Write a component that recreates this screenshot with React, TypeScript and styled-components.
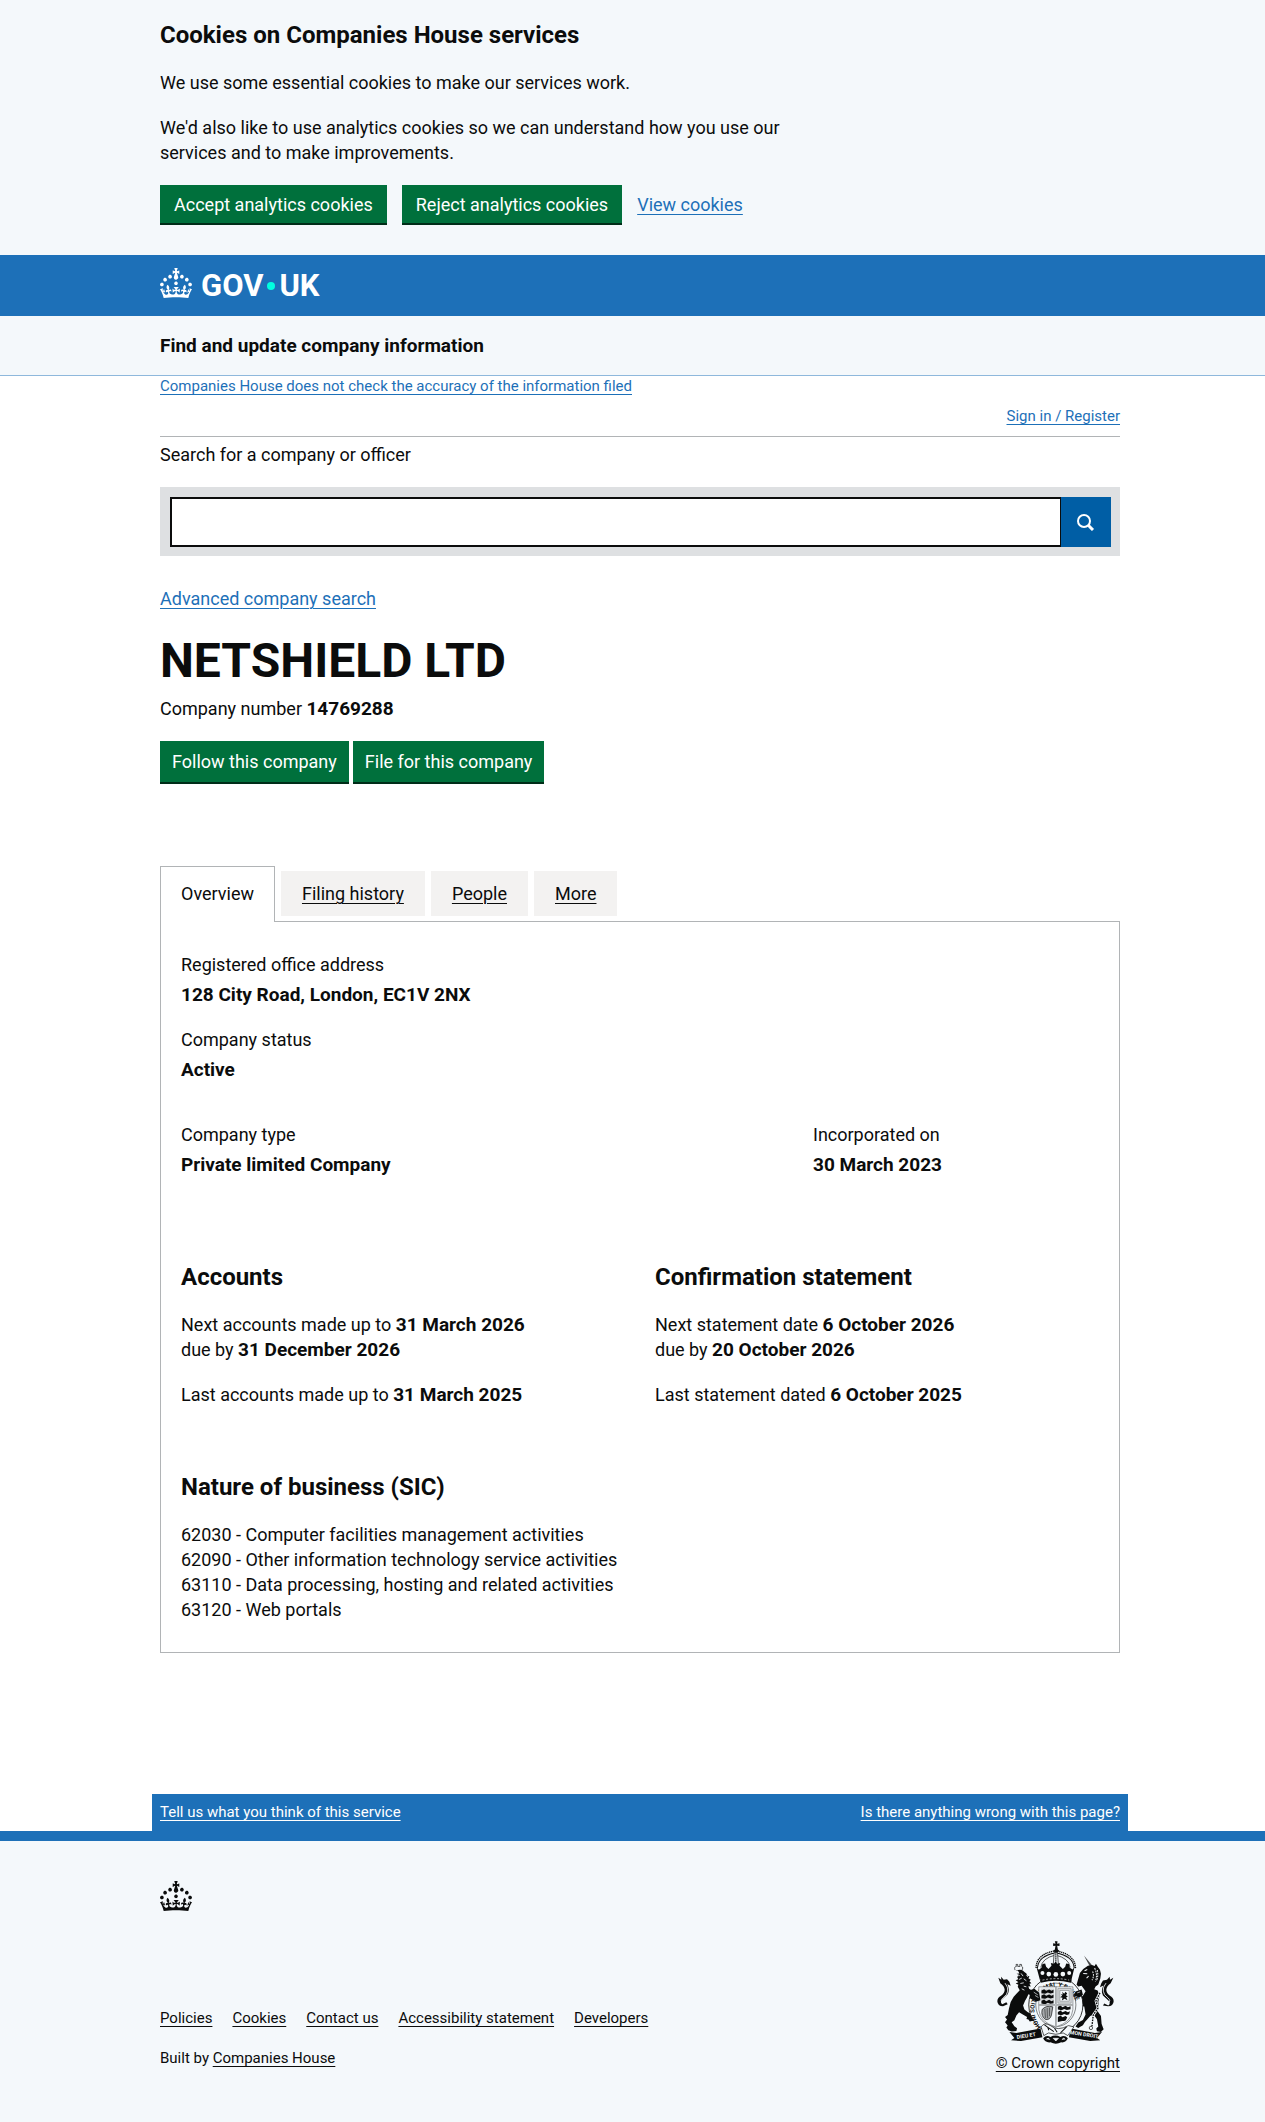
import React from 'react';
import styled, { createGlobalStyle } from 'styled-components';

const colour = {
  text: '#0b0c0c',
  brand: '#1d70b8',
  search: '#005ea5',
  tint: '#f4f8fb',
  green: '#00703c',
  greenShadow: '#002d18',
  border: '#b1b4b6',
  tab: '#f3f2f1',
  searchFrame: '#dee0e2',
};

const GlobalStyle = createGlobalStyle`
  *, *::before, *::after { box-sizing: border-box; }
  body {
    margin: 0;
    background: ${colour.tint};
    color: ${colour.text};
    font: 400 18px/25px Roboto, "Liberation Sans", sans-serif;
  }
  h1, h2, p, dl, dd, ul { margin: 0; padding: 0; }
  ul { list-style: none; }
  button, input { font: inherit; }
`;

const Band = styled.div`
  padding: 0 15px 0 30px;
`;

const Container = styled.div`
  max-width: 960px;
  margin: 0 auto;
`;

const Link = styled.a<{ $tone?: 'brand' | 'text' | 'light'; $small?: boolean }>`
  color: ${({ $tone = 'brand' }) =>
    $tone === 'brand' ? colour.brand : $tone === 'text' ? colour.text : '#fff'};
  font-size: ${({ $small }) => ($small ? '15px' : '18px')};
  line-height: ${({ $small }) => ($small ? '20px' : '25px')};
  text-decoration: underline;
  text-decoration-thickness: 1px;
  text-underline-offset: 3px;
`;

const Strong = styled.strong`
  font-size: 19px;
  font-weight: 700;
`;

const Heading = styled.h2`
  font-size: 24px;
  line-height: 30px;
  font-weight: 700;
`;

/* Cookie banner */

const CookieBanner = styled(Band).attrs({ as: 'section' })`
  padding-top: 20px;
  padding-bottom: 30px;
`;

const CookieCopy = styled.div`
  display: grid;
  gap: 20px;
  max-width: 640px;
`;

const CookieActions = styled.div`
  display: flex;
  flex-wrap: wrap;
  align-items: baseline;
  gap: 15px;
  margin-top: 20px;
`;

const Button = styled.button<{ $tall?: boolean }>`
  height: ${({ $tall }) => ($tall ? '43px' : '40px')};
  padding: 0 ${({ $tall }) => ($tall ? '12px' : '14px')};
  border: 0;
  border-bottom: 2px solid ${colour.greenShadow};
  border-radius: 0;
  background: ${colour.green};
  color: #fff;
  cursor: pointer;
`;

/* Header */

const Header = styled(Band).attrs({ as: 'header' })`
  background: ${colour.brand};
  color: #fff;
`;

const LogoLink = styled.a`
  display: flex;
  align-items: flex-start;
  gap: 9px;
  width: fit-content;
  padding: 13px 0 15px;
  color: inherit;
  text-decoration: none;
`;

const Wordmark = styled.span`
  display: flex;
  align-items: center;
  gap: 4px;
  padding-top: 3px;
  font-size: 31px;
  line-height: 30px;
  font-weight: 700;
`;

const Dot = styled.span`
  width: 8px;
  height: 8px;
  border-radius: 50%;
  background: #00ffe0;
`;

const Crown = styled.svg`
  display: block;
  width: 32px;
  height: 30px;
  fill: currentColor;
`;

const ServiceNav = styled(Band).attrs({ as: 'nav' })`
  padding-top: 17px;
  padding-bottom: 17px;
  border-bottom: 1px solid #8eb8dc;
`;

const ServiceName = styled.a`
  color: ${colour.text};
  font-size: 19px;
  font-weight: 700;
  text-decoration: none;
`;

/* Main */

const Main = styled(Band).attrs({ as: 'main' })`
  padding-bottom: 141px;
  background: #fff;
`;

const Notice = styled.p`
  display: flex;
`;

const UserBar = styled.div`
  display: flex;
  justify-content: flex-end;
  padding: 10px 0;
  border-bottom: 1px solid ${colour.border};
`;

const SearchLabel = styled.label`
  display: block;
  margin: 5px 0 20px;
`;

const SearchFrame = styled.div`
  display: flex;
  padding: 10px 9px 9px 10px;
  background: ${colour.searchFrame};
`;

const SearchInput = styled.input`
  flex: 1;
  min-width: 0;
  height: 50px;
  padding: 5px;
  border: 2px solid ${colour.text};
  border-right-width: 1px;
  border-radius: 0;
  background: #fff;
`;

const SearchButton = styled.button`
  display: grid;
  place-items: center;
  width: 50px;
  height: 50px;
  padding: 0;
  border: 0;
  background: ${colour.search};
  cursor: pointer;
`;

const AdvancedSearch = styled.p`
  margin-top: 30px;
`;

const CompanyName = styled.h1`
  margin: 25px 0 10px;
  font-size: 48px;
  line-height: 50px;
  font-weight: 700;
`;

const CompanyActions = styled.div`
  display: flex;
  gap: 4px;
  margin: 20px 0 82px;
`;

const Tabs = styled.ul`
  display: flex;
  align-items: flex-end;
  gap: 6px;
`;

const Tab = styled.li<{ $active?: boolean }>`
  position: relative;
  padding: ${({ $active }) => ($active ? '14px 20px 16px' : '10px 21px')};
  margin-bottom: ${({ $active }) => ($active ? '-1px' : '5px')};
  border: ${({ $active }) => ($active ? `1px solid ${colour.border}` : '0')};
  border-bottom: 0;
  background: ${({ $active }) => ($active ? '#fff' : colour.tab)};
`;

const TabLink = styled(Link)<{ $active?: boolean }>`
  text-decoration-line: ${({ $active }) => ($active ? 'none' : 'underline')};
`;

const Panel = styled.section`
  padding: 30px 20px;
  border: 1px solid ${colour.border};
`;

const Fact = styled.dl<{ $wide?: boolean }>`
  display: grid;
  gap: 5px;
  grid-column: ${({ $wide }) => ($wide ? 'span 2' : 'auto')};

  dd {
    font-size: 19px;
    font-weight: 700;
  }
`;

const FactStack = styled.div`
  display: grid;
  gap: 20px;
`;

const Columns = styled.div<{ $count: number; $top: number }>`
  display: grid;
  grid-template-columns: repeat(${({ $count }) => $count}, 1fr);
  gap: 30px;
  margin-top: ${({ $top }) => $top}px;
`;

const Prose = styled.section<{ $top?: number }>`
  display: grid;
  align-content: start;
  gap: 20px;
  margin-top: ${({ $top = 0 }) => $top}px;
`;

/* Footer */

const FeedbackBand = styled(Band).attrs({ as: 'aside' })`
  background: #fff;
  border-bottom: 10px solid ${colour.brand};
`;

const FeedbackBar = styled.div`
  display: flex;
  justify-content: space-between;
  max-width: 976px;
  margin: 0 auto;
  padding: 8px 8px 9px;
  background: ${colour.brand};
`;

const Footer = styled(Band).attrs({ as: 'footer' })`
  padding-top: 40px;
  padding-bottom: 49px;
  font-size: 15px;
  line-height: 20px;
`;

const FooterMeta = styled.div`
  display: flex;
  justify-content: space-between;
  align-items: flex-end;
  margin-top: 30px;
`;

const FooterInfo = styled.div`
  display: grid;
  gap: 20px;
  padding-bottom: 5px;
`;

const FooterLinks = styled.ul`
  display: flex;
  flex-wrap: wrap;
  gap: 20px;
`;

const Copyright = styled.div`
  display: flex;
  flex-direction: column;
  align-items: flex-end;
  gap: 9px;
`;

const Arms = styled.svg`
  display: block;
  width: 117px;
  height: 103px;
  margin-right: 6px;
`;

function CrownIcon({ label }: { label?: string }) {
  return (
    <Crown viewBox="0 0 32 30" role={label ? 'img' : undefined} aria-label={label} aria-hidden={label ? undefined : true}>
      <path d="M22.6 10.4c-1 .4-2-.1-2.4-1-.4-.9.1-2 1-2.4.9-.4 2 .1 2.4 1s-.1 2-1 2.4m-5.9 6.7c-.9.4-2-.1-2.4-1-.4-.9.1-2 1-2.4.9-.4 2 .1 2.4 1s-.1 2-1 2.4m10.8-3.7c-1 .4-2-.1-2.4-1-.4-.9.1-2 1-2.4.9-.4 2 .1 2.4 1s0 2-1 2.4m3.3 4.8c-1 .4-2-.1-2.4-1-.4-.9.1-2 1-2.4.9-.4 2 .1 2.4 1s-.1 2-1 2.4M17 4.7l2.3 1.2V2.5l-2.3.7-.2-.2.9-3h-3.4l.9 3-.2.2c-.1.1-2.3-.7-2.3-.7v3.4L15 4.7c.1.1.1.2.2.2l-1.3 4c-.1.2-.1.4-.1.6 0 1.1.8 2 1.9 2.2h.7c1-.2 1.9-1.1 1.9-2.1 0-.2 0-.4-.1-.6l-1.3-4c-.1-.2 0-.2.1-.3m-7.6 5.7c.9.4 2-.1 2.4-1 .4-.9-.1-2-1-2.4-.9-.4-2 .1-2.4 1s0 2 1 2.4m-5 3c.9.4 2-.1 2.4-1 .4-.9-.1-2-1-2.4-.9-.4-2 .1-2.4 1s.1 2 1 2.4m-3.2 4.8c.9.4 2-.1 2.4-1 .4-.9-.1-2-1-2.4-.9-.4-2 .1-2.4 1s0 2 1 2.4m14.8 11c4.4 0 8.6.3 12.3.8 1.1-4.5 2.4-7 3.7-8.8l-2.5-.9c.2 1.3.3 1.9 0 2.7-.4-.4-.8-1.1-1.1-2.3l-1.2 4c.7-.5 1.3-.8 2-.9-1.1 2.5-2.6 3.1-3.5 3-1.1-.2-1.7-1.2-1.5-2.1.3-1.2 1.5-1.5 2.1-.1 1.1-2.3-.8-3-2-2.3 1.9-1.9 2.1-3.5.6-5.6-2.1 1.6-2.1 3.2-1.2 5.5-1.2-1.4-3.2-.6-2.5 1.6.9-1.4 2.1-.5 1.9.8-.2 1.1-1.7 2.1-3.5 1.9-2.7-.2-2.9-2.1-2.9-3.6.7-.1 1.9.5 2.9 1.9l.4-4.3c-1.1 1.1-2.1 1.4-3.2 1.4.4-1.2 2.1-3 2.1-3h-5.4s1.7 1.9 2.1 3c-1.1 0-2.1-.2-3.2-1.4l.4 4.3c1-1.4 2.2-2 2.9-1.9-.1 1.5-.2 3.4-2.9 3.6-1.9.2-3.4-.8-3.5-1.9-.2-1.3 1-2.2 1.9-.8.7-2.3-1.2-3-2.5-1.6.9-2.2.9-3.9-1.2-5.5-1.5 2-1.3 3.7.6 5.6-1.2-.7-3.1 0-2 2.3.6-1.4 1.8-1.1 2.1.1.2.9-.3 1.9-1.5 2.1-.9.2-2.4-.5-3.5-3 .6 0 1.2.3 2 .9l-1.2-4c-.3 1.1-.7 1.9-1.1 2.3-.3-.8-.2-1.4 0-2.7l-2.9.9C1.3 23 2.6 25.5 3.7 30c3.7-.5 7.9-.8 12.3-.8" />
    </Crown>
  );
}

/* The royal coat of arms: crown, garter and shield, lion, unicorn, motto ribbon. */
function RoyalArms() {
  const ink = colour.text;
  const paper = colour.tint;
  return (
    <Arms viewBox="80 61 350 308" aria-hidden="true">
      {/* lion */}
      <g fill={ink}>
        <path d="M136 150q14-6 22 0l4 4 6 4 2 6 7 3-3 5 7 5-4 4 6 6-6 2 4 8-7-1 2 8 14 8 16 4 12 8 2 10-14-2-14-4-18-8q-6 14-10 20l-6 14 4 12q10 10 22 14l12 12-2 6-16 4-4-6-6-2 2-6-14-8-10-6-8 10-6 14-8 6 8 12 8 6-2 8-14 2-10-4-6-8 4-6-8-10 6-8-6-8 8-6 4-20q2-18 14-34l18-20-6-10 2-6-8-4 8-4-8-6 8-3-4-7 5-2-6-7 8-1-4-8z" />
        <path d="M98 256q-16 0-17-15 0-10 12-17 10-7 10-17-1-12-13-20l-6-16 9 6-1-9 8 9 10-2 7 8 4 12-10-5q8 17 1 30-10 9-17 16-7 8 1 14l12-6 4 6z" />
      </g>
      <path d="M97 246q-9-6 1-15 13-9 14-20 2-12-8-24" fill="none" stroke={paper} strokeWidth="2.5" />
      <path d="M140 160l8 5M152 158l6 8M146 176l8-4M160 174l8 6M150 188l10-2M160 196l8 2M168 164l5 4M154 204l8 4" stroke={paper} strokeWidth="2.5" />
      <path d="M134 148q-4-10 4-11l-1-6h5v6h7l-1-6h5l1 6q6 3 0 12" fill="none" stroke={ink} strokeWidth="2" />

      {/* unicorn */}
      <path d="M340 104l18 33 7-3z" fill={ink} opacity=".75" />
      <g fill={ink}>
        <path d="M328 157l10-12 14-10 12-2 8 3 4-7 5 8 7 10 3 12-2 14-6 18-8 6-4 8 10 4 6 16-4 18 2 18-4 10 10 14 2 24 6 16-8 8-12-2-2-8 6-6-4-22-10-14-10 4-16 18-6 10-14 8-8-4 8-12 14-8 8-16-4-24-20-2-24 2-8-8 4-10 14-6 20 0 10-8 8-14-6-8-6-8-10 2-5-5z" />
        <path d="M412 256q16 0 17-15 0-10-12-17-10-7-10-17 1-12 13-20l8-16-10 6-1-9-8 9-12 2-5 8-4 12 10-5q-8 17-1 30 10 9 17 16 7 8-1 14l-12-6-4 6z" />
      </g>
      <path d="M413 246q9-6-1-15-13-9-14-20-2-12 8-24" fill="none" stroke={paper} strokeWidth="2.5" />
      <path d="M372 142q10 20 2 40M380 148q4 16-2 32M366 152q6 14-2 26" fill="none" stroke={paper} strokeWidth="3" strokeDasharray="5 3" />
      <path d="M342 150l8-4M338 158l12 1M354 166l-6 6" stroke={paper} strokeWidth="3" />
      <path d="M388 216l-12 24 6 22-14 20-4 34" fill="none" stroke={paper} strokeWidth="8" />
      <path d="M388 216l-12 24 6 22-14 20-4 34" fill="none" stroke={ink} strokeWidth="4" strokeDasharray="5 3" />
      <circle cx="361" cy="321" r="5" fill={paper} stroke={ink} strokeWidth="2" />

      {/* garter */}
      <ellipse cx="256" cy="252" rx="81" ry="84" fill={paper} stroke={ink} strokeWidth="2.5" />
      <ellipse cx="256" cy="252" rx="60" ry="65" fill={paper} stroke={ink} strokeWidth="1.5" />
      <path id="garter-line" d="M212 318a64 70 0 1 1 88 0" fill="none" />
      <text fill={ink} fontFamily="Roboto, sans-serif" fontSize="18" fontWeight="700">
        <textPath href="#garter-line">HONI SOIT QUI MAL Y PENSE</textPath>
      </text>

      {/* quartered shield */}
      <path d="M205 198h102v68q-3 38-51 52-48-14-51-52z" fill={paper} stroke="#6b6e70" strokeWidth="2" />
      <path d="M211 203h40v48h-40z" fill="#d5d8da" />
      <path d="M213 209l8-4 6 5 9-4 7 4 6-3v9l-9 2-8-3-8 4-11-2zM213 224l8-4 6 5 9-4 7 4 6-3v9l-9 2-8-3-8 4-11-2zM213 240l8-4 6 5 9-4 7 4 6-3v9l-9 2-8-3-8 4-11-2z" fill={ink} />
      <path d="M262 203h40v44h-40z" fill="#d5d8da" stroke="#6b6e70" strokeWidth="1.5" />
      <path d="M268 209h28v32h-28z" fill={paper} stroke="#888b8d" strokeWidth="2" />
      <path d="M275 213l6 6 4-6 5 5-4 5 6 3-5 4 4 8-9-4-8 5 2-8-7-2 6-4-4-5 6 1z" fill={ink} />
      <path d="M215 266q12-14 32-8l-4 24q-4 16-18 14-14-10-10-30z" fill="#a6a9ab" stroke={ink} strokeWidth="2" />
      <path d="M223 264l2 28M230 261l1 31M237 260v26" stroke={ink} strokeWidth="1.5" />
      <path d="M262 258l8-4 6 5 9-4 7 4 8-3v9l-11 2-8-3-8 4-11-2zM262 273l8-4 6 5 9-4 7 4 6-3-2 9-7 2-8-3-8 4-11-2zM262 288l8-4 6 5 9-4 5 4-4 9-5 2-6 0-13 3z" fill={ink} />
      <path d="M256 196v123M205 252h102" stroke="#85888a" strokeWidth="5" />
      <path d="M256 196v123M205 252h102" stroke={paper} strokeWidth="1.5" />
      <path d="M178 208l14-4 14 12 4 22-12 4-20-10zM333 206l-18 6-6 12 18 6 10-8z" fill={ink} />
      <path d="M190 214l12 8M194 224l10 6M320 216l9-3" stroke={paper} strokeWidth="2" />

      {/* crown */}
      <path d="M204 178l-7-36q0-42 58-52 58 10 60 52l-7 36z" fill={paper} />
      <path d="M201 142q2-36 54-46 54 10 56 46" fill="none" stroke={ink} strokeWidth="3" />
      <path d="M197 142q0-42 58-52 58 10 60 52" fill="none" stroke={ink} strokeWidth="4" strokeDasharray="4 2" />
      <path d="M211 140q4-28 44-37 40 9 44 37" fill="none" stroke={ink} strokeWidth="2" />
      <path d="M253 62h8l-1 7 7-1v8l-7-1 2 11 4 4-4 5h-9l-4-5 4-4 2-11-7 1v-8l7 1z" fill={ink} />
      <path d="M251 96h10l3 40h-16z" fill={paper} stroke={ink} strokeWidth="2" />
      <path d="M256 98v34" stroke={ink} strokeWidth="4" strokeDasharray="4 2" />
      <path d="M198 139l7 8 8-6 3-11 8-2 3 10 7 7 9-10-2-8 9 2 5-6 5 6 9-2-2 8 10 10 7-7 3-10 8 2 3 11 8 5 6-7-4 16-5 21H208z" fill={ink} />
      <g fill={paper}>
        <circle cx="216" cy="157" r="6" />
        <circle cx="235" cy="160" r="7" />
        <circle cx="256" cy="161" r="7" />
        <circle cx="277" cy="160" r="7" />
        <circle cx="296" cy="157" r="6" />
      </g>
      <path d="M208 176q48-14 96 0l-3 10q-45-12-90 0z" fill={ink} />
      <path d="M216 178q40-9 80 0" fill="none" stroke={paper} strokeWidth="2" strokeDasharray="6 5" />

      {/* motto ribbon and buckle */}
      <path d="M117 333l21 3 72-13 6 26-64 11-30-2 10-7z" fill={ink} />
      <path d="M394 333l-21 3-72-13-6 26 64 11 30-2-10-7z" fill={ink} />
      <path d="M212 318q10-16 28-4 20 18 54 0l16 4-18 26-14-8-22 4-22-4-14 8z" fill={paper} stroke={ink} strokeWidth="2" />
      <path d="M222 312l28 20M232 320l3 8M288 318l-18 18M252 322l8 12" stroke={ink} strokeWidth="3" />
      <path d="M218 352q10-12 22-4 14-8 30 0 12-8 22 4-6 14-20 12-16 8-32 0-16 2-22-12z" fill={ink} />
      <path d="M228 354q6-6 10 2M274 356q6-8 10-1M248 352h16l-8 8z" fill={paper} stroke={paper} strokeWidth="2" />
      <g fill={paper} fontFamily="Roboto, sans-serif" fontSize="16" fontWeight="700">
        <text x="140" y="354" transform="rotate(-9 140 354)">DIEU ET</text>
        <text x="297" y="339" transform="rotate(9 297 339)">MON DROIT</text>
      </g>
    </Arms>
  );
}

const tabs = ['Overview', 'Filing history', 'People', 'More'];
const sicCodes = [
  '62030 - Computer facilities management activities',
  '62090 - Other information technology service activities',
  '63110 - Data processing, hosting and related activities',
  '63120 - Web portals',
];
const footerLinks = ['Policies', 'Cookies', 'Contact us', 'Accessibility statement', 'Developers'];

export default function App() {
  return (
    <>
      <GlobalStyle />

      <CookieBanner aria-label="Cookies on Companies House services">
        <Container>
          <CookieCopy>
            <Heading>Cookies on Companies House services</Heading>
            <p>We use some essential cookies to make our services work.</p>
            <p>We'd also like to use analytics cookies so we can understand how you use our services and to make improvements.</p>
          </CookieCopy>
          <CookieActions>
            <Button type="button">Accept analytics cookies</Button>
            <Button type="button">Reject analytics cookies</Button>
            <Link href="#cookies">View cookies</Link>
          </CookieActions>
        </Container>
      </CookieBanner>

      <Header>
        <Container>
          <LogoLink href="#home" aria-label="GOV.UK">
            <CrownIcon />
            <Wordmark>
              <span>GOV</span>
              <Dot />
              <span>UK</span>
            </Wordmark>
          </LogoLink>
        </Container>
      </Header>

      <ServiceNav aria-label="Service">
        <Container>
          <ServiceName href="#service">Find and update company information</ServiceName>
        </Container>
      </ServiceNav>

      <Main>
        <Container>
          <Notice>
            <Link $small href="#accuracy">Companies House does not check the accuracy of the information filed</Link>
          </Notice>
          <UserBar>
            <Link $small href="#signin">Sign in / Register</Link>
          </UserBar>

          <form role="search" onSubmit={(event) => event.preventDefault()}>
            <SearchLabel htmlFor="site-search">Search for a company or officer</SearchLabel>
            <SearchFrame>
              <SearchInput id="site-search" type="search" name="q" />
              <SearchButton type="submit" aria-label="Search">
                <svg width="20" height="18" viewBox="0 0 20 18" fill="none" stroke="#fff" aria-hidden="true">
                  <circle cx="8" cy="8" r="6" strokeWidth="2" />
                  <path d="M12 12l5 5" strokeWidth="3" />
                </svg>
              </SearchButton>
            </SearchFrame>
          </form>

          <AdvancedSearch>
            <Link href="#advanced">Advanced company search</Link>
          </AdvancedSearch>

          <CompanyName>NETSHIELD LTD</CompanyName>
          <p>Company number <Strong>14769288</Strong></p>
          <CompanyActions>
            <Button $tall type="button">Follow this company</Button>
            <Button $tall type="button">File for this company</Button>
          </CompanyActions>

          <Tabs>
            {tabs.map((tab, index) => (
              <Tab key={tab} $active={index === 0}>
                <TabLink $tone="text" $active={index === 0} href={`#tab-${index}`}>{tab}</TabLink>
              </Tab>
            ))}
          </Tabs>

          <Panel aria-label="Overview">
            <FactStack>
              <Fact>
                <dt>Registered office address</dt>
                <dd>128 City Road, London, EC1V 2NX</dd>
              </Fact>
              <Fact>
                <dt>Company status</dt>
                <dd>Active</dd>
              </Fact>
            </FactStack>

            <Columns $count={3} $top={40}>
              <Fact $wide>
                <dt>Company type</dt>
                <dd>Private limited Company</dd>
              </Fact>
              <Fact>
                <dt>Incorporated on</dt>
                <dd>30 March 2023</dd>
              </Fact>
            </Columns>

            <Columns $count={2} $top={85}>
              <Prose>
                <Heading>Accounts</Heading>
                <p>
                  Next accounts made up to <Strong>31 March 2026</Strong>
                  <br />
                  due by <Strong>31 December 2026</Strong>
                </p>
                <p>Last accounts made up to <Strong>31 March 2025</Strong></p>
              </Prose>
              <Prose>
                <Heading>Confirmation statement</Heading>
                <p>
                  Next statement date <Strong>6 October 2026</Strong>
                  <br />
                  due by <Strong>20 October 2026</Strong>
                </p>
                <p>Last statement dated <Strong>6 October 2025</Strong></p>
              </Prose>
            </Columns>

            <Prose $top={65}>
              <Heading>Nature of business (SIC)</Heading>
              <ul>
                {sicCodes.map((code) => (
                  <li key={code}>{code}</li>
                ))}
              </ul>
            </Prose>
          </Panel>
        </Container>
      </Main>

      <FeedbackBand>
        <FeedbackBar>
          <Link $tone="light" $small href="#feedback">Tell us what you think of this service</Link>
          <Link $tone="light" $small href="#problem">Is there anything wrong with this page?</Link>
        </FeedbackBar>
      </FeedbackBand>

      <Footer>
        <Container>
          <CrownIcon label="GOV.UK crown" />
          <FooterMeta>
            <FooterInfo>
              <FooterLinks>
                {footerLinks.map((label) => (
                  <li key={label}>
                    <Link $tone="text" $small href={`#${label.split(' ')[0].toLowerCase()}`}>{label}</Link>
                  </li>
                ))}
              </FooterLinks>
              <p>
                Built by <Link $tone="text" $small href="#companies-house">Companies House</Link>
              </p>
            </FooterInfo>
            <Copyright>
              <RoyalArms />
              <Link $tone="text" $small href="#copyright">© Crown copyright</Link>
            </Copyright>
          </FooterMeta>
        </Container>
      </Footer>
    </>
  );
}
